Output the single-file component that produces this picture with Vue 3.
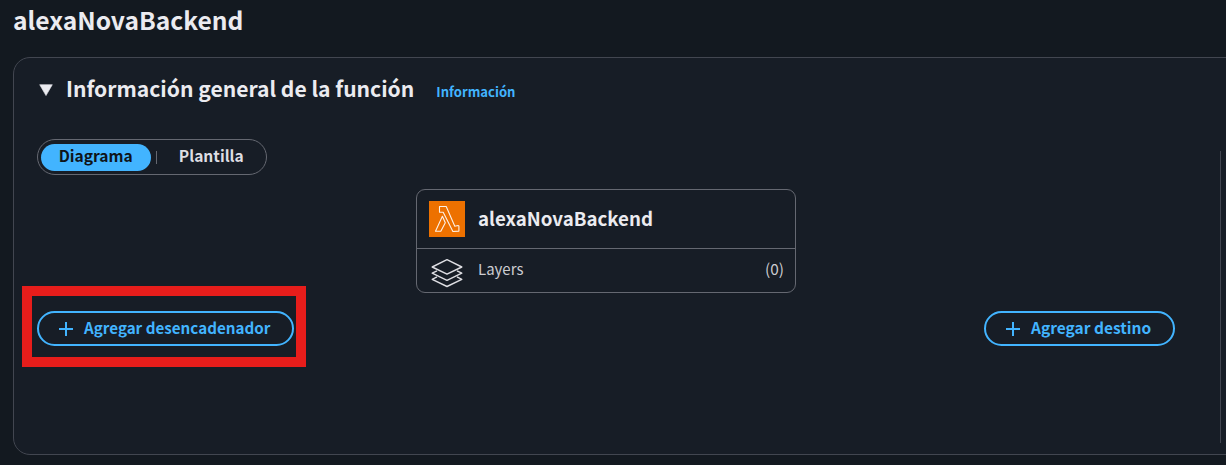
<script setup>
import { ref } from 'vue'

const functionName = 'alexaNovaBackend'
const layerCount = 0
const view = ref('diagram')
</script>

<template>
  <main class="page">
    <h1 class="title">{{ functionName }}</h1>

    <section class="panel">
      <header class="panel-head">
        <svg class="caret" width="14" height="12" viewBox="0 0 14 12"><path d="M.7.7h12.6L7 11.6z" fill="#ebebf0" stroke="#ebebf0" stroke-width=".6" stroke-linejoin="round" /></svg>
        <h2>Información general de la función</h2>
        <a class="info">Información</a>
      </header>

      <div class="content">
        <div class="segments">
          <button class="segment" :class="{ active: view === 'diagram' }" @click="view = 'diagram'">Diagrama</button>
          <i class="separator"></i>
          <button class="segment" :class="{ active: view === 'template' }" @click="view = 'template'">Plantilla</button>
        </div>

        <div class="card">
          <div class="card-top">
            <svg width="36" height="36" viewBox="0 0 36 36">
              <rect width="36" height="36" fill="#ed7100" />
              <g fill="none" stroke="#fff" stroke-width="1.1" stroke-linejoin="round" opacity=".9">
                <path d="M10.5 5.5h6.7l8.6 19.8 3.2-.8.9.4v5.2l-6 .4L14.2 11.2h-3.7z" />
                <path d="M13.4 15.3l2.9 6.5-4.5 8.4H6.5z" />
              </g>
            </svg>
            <strong>{{ functionName }}</strong>
          </div>
          <div class="card-layers">
            <svg width="34" height="30" viewBox="0 0 34 30" fill="none" stroke="#dedee3" stroke-width="1.4" stroke-linejoin="round">
              <path d="M17 1.7L31.8 9 17 16.2 2.2 9z" />
              <path d="M7 12.8l-4.8 2.4L17 22.4l14.8-7.2-4.8-2.4" />
              <path d="M7 18.9l-4.8 2.4L17 28.5l14.8-7.2-4.8-2.4" />
            </svg>
            <span>Layers</span>
            <span class="count">({{ layerCount }})</span>
          </div>
        </div>

        <div class="actions">
          <div class="trigger">
            <button class="action">
              <svg width="14" height="14" viewBox="0 0 14 14"><path d="M7 0v14M0 7h14" stroke="#42b4ff" stroke-width="2" /></svg>
              <span>Agregar desencadenador</span>
            </button>
            <div class="highlight"></div>
          </div>
          <button class="action destination">
            <svg width="14" height="14" viewBox="0 0 14 14"><path d="M7 0v14M0 7h14" stroke="#42b4ff" stroke-width="2" /></svg>
            <span>Agregar destino</span>
          </button>
        </div>
      </div>
    </section>
  </main>
</template>

<style>
body {
  background: #131920;
  overflow: hidden;
}
</style>

<style scoped>
.page {
  box-sizing: border-box;
  height: 465px;
  padding-left: 13px;
  background: #131920;
  color: #ebebf0;
  font-family: "Noto Sans CJK SC", "Noto Sans", sans-serif;
  overflow: hidden;
}
.title {
  margin: 0;
  font-size: 24.6px;
  line-height: 38px;
  font-weight: 700;
}
.panel {
  box-sizing: border-box;
  width: 1240px;
  height: 398px;
  margin-top: 19px;
  border: 1px solid #424650;
  border-radius: 17px;
  background: #171d26;
}
.panel-head {
  display: flex;
  align-items: baseline;
  height: 81px;
  padding: 12px 0 0 25px;
  box-sizing: border-box;
}
.caret {
  position: relative;
  top: -1px;
}
h2 {
  margin: 0 0 0 13px;
  font-size: 21.08px;
  line-height: 36px;
  font-weight: 700;
}
.info {
  margin-left: 22px;
  color: #42b4ff;
  font-size: 13.1px;
  font-weight: 700;
}
.content {
  position: relative;
  box-sizing: border-box;
  width: 1184px;
  margin-left: 23px;
}
.content::after {
  content: "";
  position: absolute;
  top: 12px;
  right: 0;
  width: 1px;
  height: 292px;
  background: #424650;
}
.segments {
  display: flex;
  align-items: center;
  box-sizing: border-box;
  width: 230px;
  height: 36px;
  padding-left: 3px;
  border: 1px solid #656871;
  border-radius: 18px;
}
button {
  padding: 0;
  border: 0;
  background: none;
  font-family: inherit;
  font-weight: 700;
}
.segment {
  width: 110px;
  height: 27px;
  border-radius: 14px;
  color: #dedee3;
  font-size: 15.6px;
  line-height: 23px;
  padding-bottom: 4px;
}
.segment.active {
  background: #42b4ff;
  color: #0f141a;
}
.separator {
  width: 1px;
  height: 13px;
  margin: 0 0 0 5px;
  background: #656871;
}
.card {
  box-sizing: border-box;
  width: 380px;
  height: 104px;
  margin: 14px 0 0 379px;
  border: 1px solid #656871;
  border-radius: 9px;
}
.card-top {
  display: flex;
  align-items: center;
  box-sizing: border-box;
  height: 59px;
  padding-left: 12px;
  border-bottom: 1px solid #656871;
}
.card-top strong {
  margin: 0 0 2px 13px;
  font-size: 18.7px;
  line-height: 30px;
}
.card-layers {
  display: flex;
  align-items: center;
  height: 43px;
  padding: 0 11px 0 13px;
  color: #ccccd1;
  font-size: 15px;
  line-height: 22px;
}
.card-layers svg {
  margin-top: 5px;
}
.card-layers span {
  margin: 0 0 4px 14px;
}
.card-layers .count {
  margin: 0 0 5px auto;
  font-size: 15.4px;
}
.actions {
  display: flex;
  justify-content: space-between;
  width: 1138px;
  margin-top: 18px;
}
.trigger {
  position: relative;
}
.action {
  display: flex;
  align-items: center;
  box-sizing: border-box;
  width: 257px;
  height: 35px;
  padding-left: 20px;
  border: 2px solid #42b4ff;
  border-radius: 18px;
  color: #42b4ff;
  font-size: 15.2px;
  line-height: 22px;
  white-space: nowrap;
}
.action span {
  margin: 0 0 4px 11px;
}
.destination {
  width: 191px;
  font-size: 15.5px;
}
.highlight {
  position: absolute;
  top: -25px;
  left: -15px;
  box-sizing: border-box;
  width: 284px;
  height: 81px;
  border: 10px solid #e71d1b;
  pointer-events: none;
}
</style>
